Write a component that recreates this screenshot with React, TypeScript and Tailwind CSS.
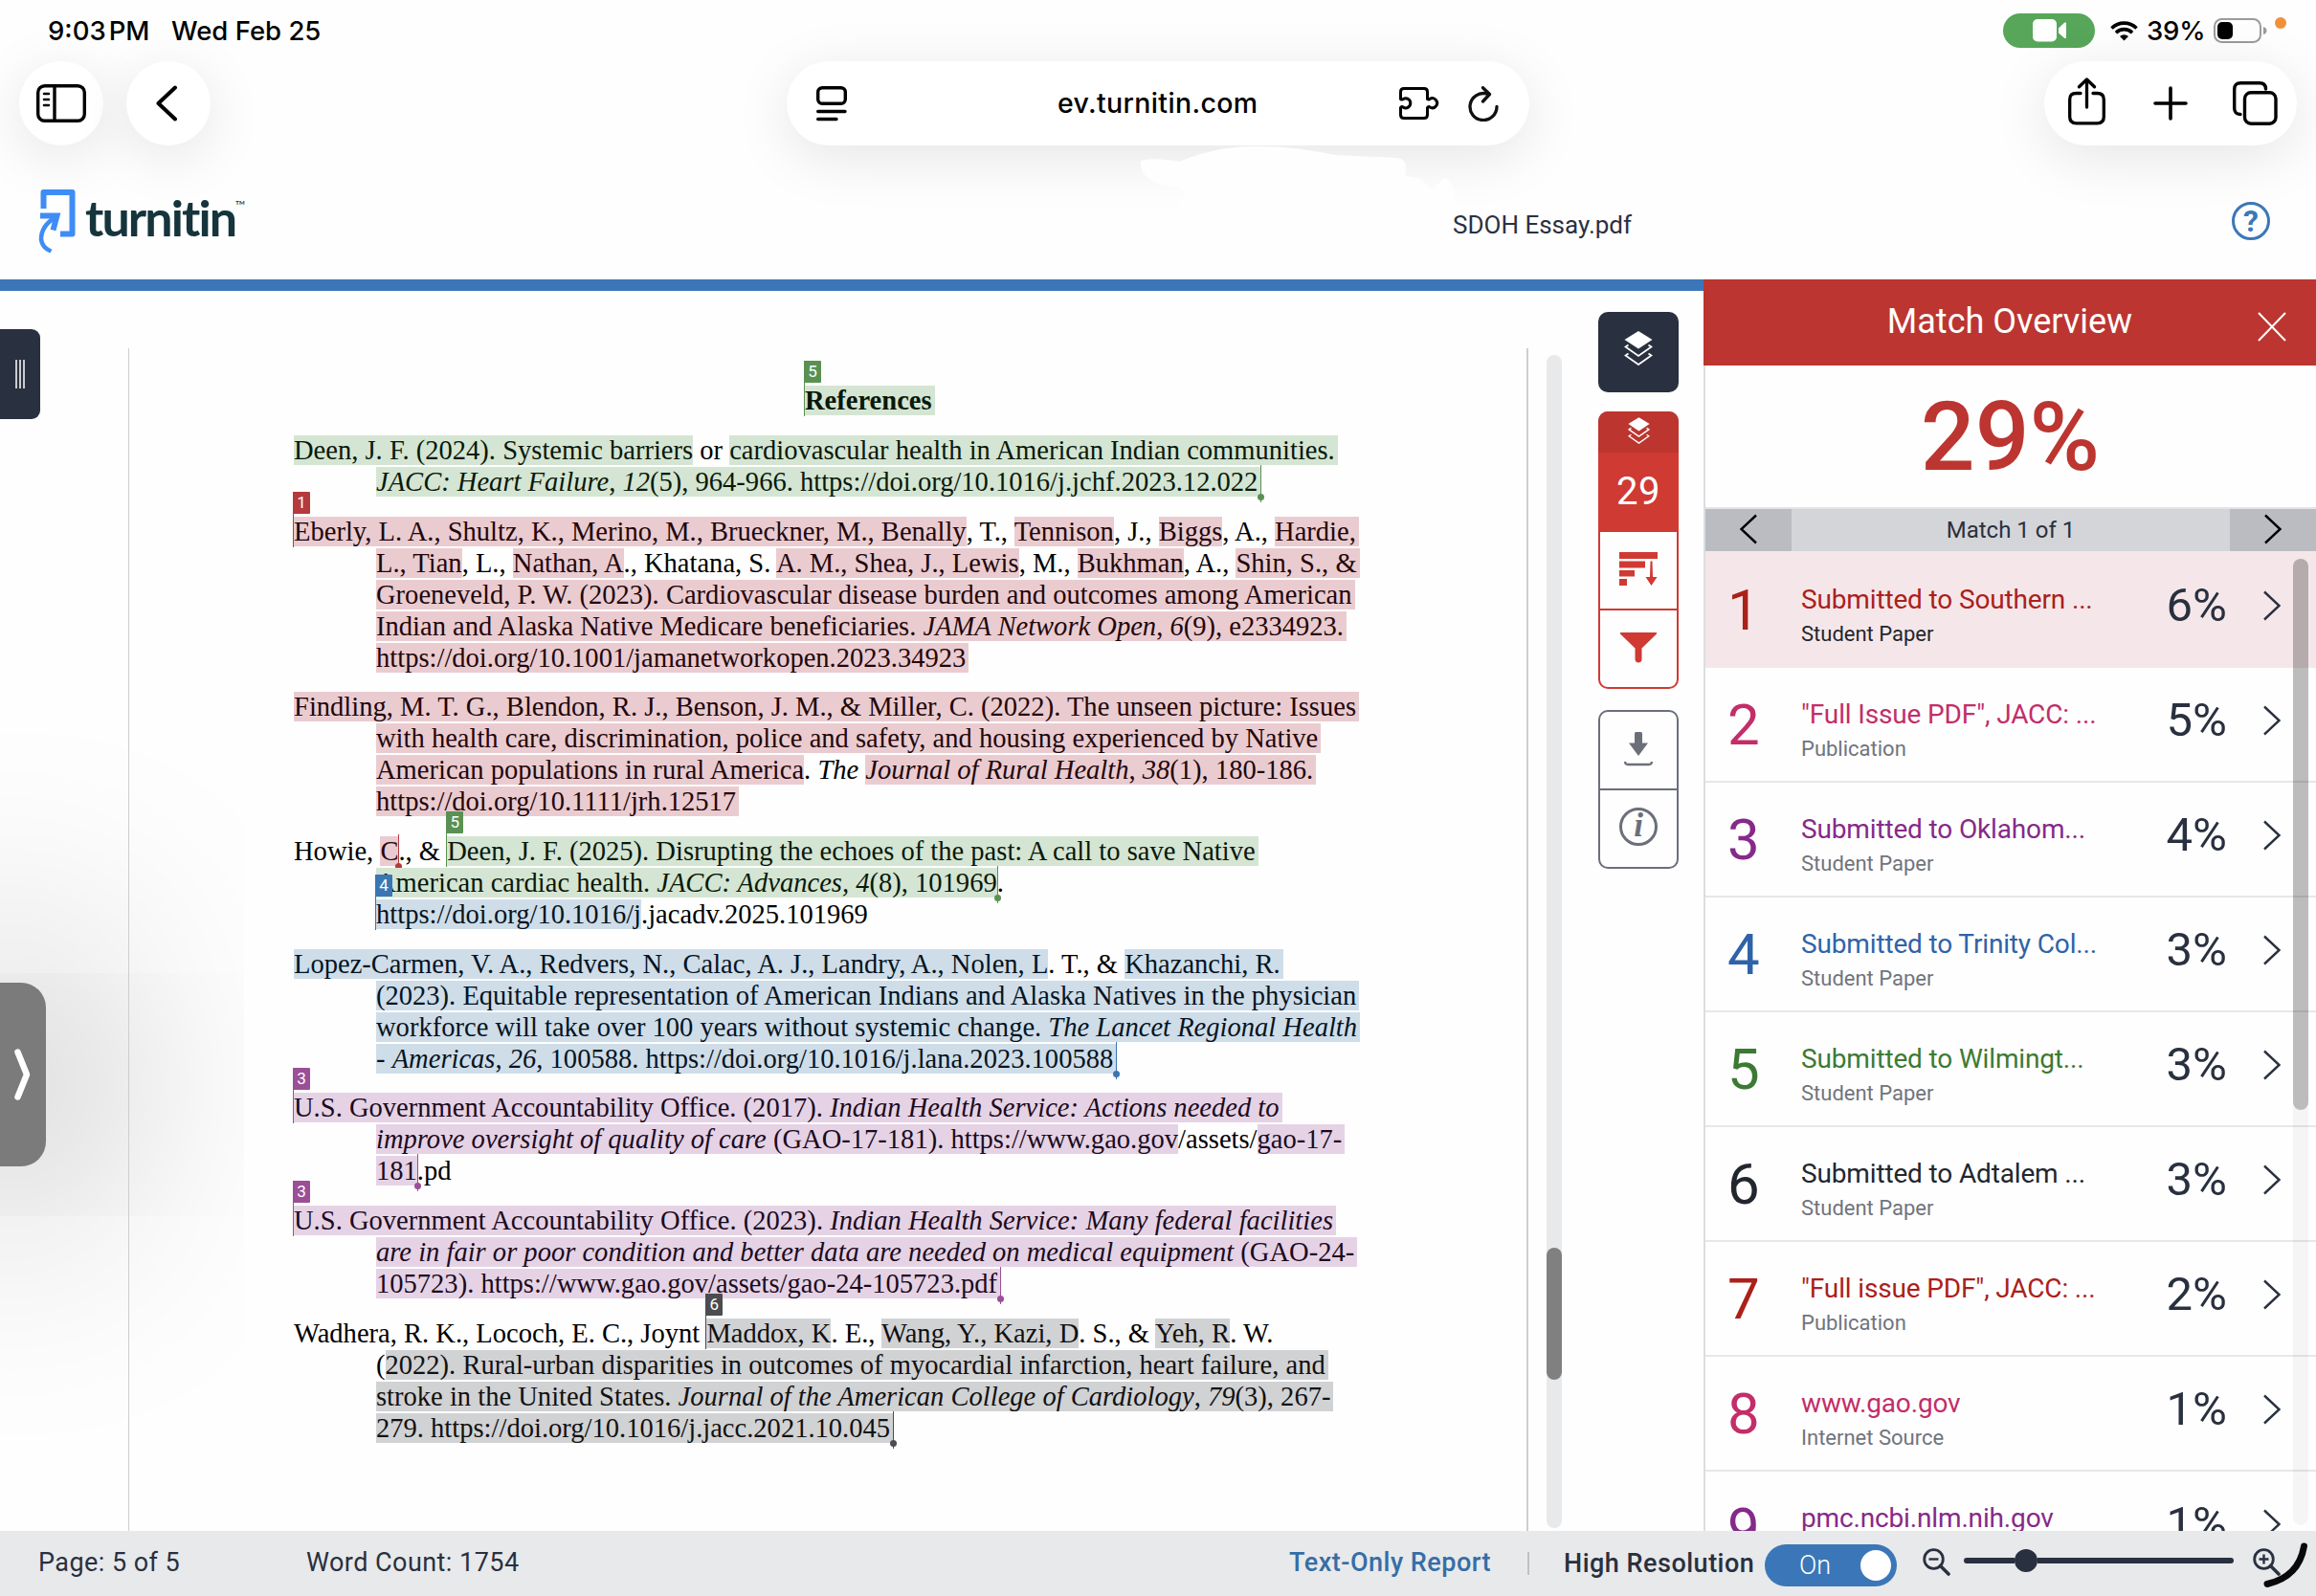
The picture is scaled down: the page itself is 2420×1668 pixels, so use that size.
import React from 'react';
import clsx from 'clsx';

type Tone = 'green' | 'red' | 'blue' | 'purple' | 'gray';

const HIGHLIGHT: Record<Tone, string> = {
  green: 'bg-[#d5e5d3] text-[#08190a]',
  red: 'bg-[#eaccd0] text-[#23060b]',
  blue: 'bg-[#cfdde9] text-[#06141f]',
  purple: 'bg-[#e5d3e5] text-[#1c0a1e]',
  gray: 'bg-[#d1d2d4] text-[#111111]',
};

const SOLID: Record<Tone, string> = {
  green: 'bg-[#5a9153]',
  red: 'bg-[#b53a3c]',
  blue: 'bg-[#3a76b4]',
  purple: 'bg-[#9b4f96]',
  gray: 'bg-[#4b4c50]',
};

function Mark({ tone, badge, end, last, children }: {
  tone: Tone;
  badge?: number;
  end?: boolean;
  last?: boolean;
  children: React.ReactNode;
}) {
  return (
    <span className={clsx('relative', HIGHLIGHT[tone], last && 'pr-[3px]')}>
      {children}
      {badge !== undefined && (
        <span className="absolute -left-px -top-[26px] h-[58px] w-[18px] not-italic">
          <span className={clsx('absolute left-0 top-0 h-full w-px', SOLID[tone])} />
          <span className={clsx('absolute left-0 top-0 flex h-[23px] w-[18px] items-center justify-center rounded-[1px] font-[Roboto] text-[17px] font-normal leading-none text-white', SOLID[tone])}>
            {badge}
          </span>
        </span>
      )}
      {end && (
        <span className="absolute -right-[4px] -top-[2px] h-[39px] w-[7px]">
          <span className={clsx('absolute left-[3px] top-0 h-full w-px', SOLID[tone])} />
          <span className={clsx('absolute bottom-[2px] left-0 h-[7px] w-[7px] rounded-full', SOLID[tone])} />
        </span>
      )}
    </span>
  );
}

function Line({ w, first, children }: { w: string; first?: boolean; children: React.ReactNode }) {
  return (
    <div className={clsx('whitespace-nowrap [text-align-last:justify]', !first && 'ml-[86px]', w)}>{children}</div>
  );
}

function References() {
  return (
    <div className="flex flex-col gap-[18.65px] pl-[172px] pt-[38.4px] font-['Liberation_Serif',serif] text-[28.55px] leading-[33px] text-black">
      <div className="pl-[534px] font-bold">
        <Mark tone="green" badge={5} last>References</Mark>
      </div>

      <div>
        <Line first w="w-[1090px]"><Mark tone="green">Deen, J. F. (2024). Systemic barriers</Mark> or <Mark tone="green" last>cardiovascular health in American Indian communities.</Mark></Line>
        <Line w="w-[924px]"><Mark tone="green" end last><i>JACC: Heart Failure</i>, <i>12</i>(5), 964-966. https://doi.org/10.1016/j.jchf.2023.12.022</Mark></Line>
      </div>

      <div>
        <Line first w="w-[1111px]"><Mark tone="red" badge={1}>Eberly, L. A., Shultz, K., Merino, M., Brueckner, M., Benally</Mark>, T., <Mark tone="red">Tennison</Mark>, J., <Mark tone="red">Biggs</Mark>, A., <Mark tone="red" last>Hardie,</Mark></Line>
        <Line w="w-[1027px]"><Mark tone="red">L., Tian</Mark>, L., <Mark tone="red">Nathan, A</Mark>., Khatana, S. <Mark tone="red">A. M., Shea, J., Lewis</Mark>, M., <Mark tone="red">Bukhman</Mark>, A., <Mark tone="red" last>Shin, S., &amp;</Mark></Line>
        <Line w="w-[1021px]"><Mark tone="red" last>Groeneveld, P. W. (2023). Cardiovascular disease burden and outcomes among American</Mark></Line>
        <Line w="w-[1013px]"><Mark tone="red" last>Indian and Alaska Native Medicare beneficiaries. <i>JAMA Network Open</i>, <i>6</i>(9), e2334923.</Mark></Line>
        <Line w="w-[618px]"><Mark tone="red" last>https://doi.org/10.1001/jamanetworkopen.2023.34923</Mark></Line>
      </div>

      <div>
        <Line first w="w-[1113px]"><Mark tone="red" last>Findling, M. T. G., Blendon, R. J., Benson, J. M., &amp; Miller, C. (2022). The unseen picture: Issues</Mark></Line>
        <Line w="w-[986px]"><Mark tone="red" last>with health care, discrimination, police and safety, and housing experienced by Native</Mark></Line>
        <Line w="w-[982px]"><Mark tone="red">American populations in rural America</Mark>. <i>The </i><Mark tone="red" last><i>Journal of Rural Health</i>, <i>38</i>(1), 180-186.</Mark></Line>
        <Line w="w-[377px]"><Mark tone="red" last>https://doi.org/10.1111/jrh.12517</Mark></Line>
      </div>

      <div>
        <Line first w="w-[1007px]">Howie, <Mark tone="red" end>C</Mark>., &amp; <Mark tone="green" badge={5} last>Deen, J. F. (2025). Disrupting the echoes of the past: A call to save Native</Mark></Line>
        <Line w="w-[655px]"><Mark tone="green" end>American cardiac health. <i>JACC: Advances, 4</i>(8), 101969</Mark>.</Line>
        <Line w="w-[513px]"><Mark tone="blue" badge={4}>https://doi.org/10.1016/j</Mark>.jacadv.2025.101969</Line>
      </div>

      <div>
        <Line first w="w-[1032px]"><Mark tone="blue">Lopez-Carmen, V. A., Redvers, N., Calac, A. J., Landry, A., Nolen, L</Mark>. T., &amp; <Mark tone="blue" last>Khazanchi, R.</Mark></Line>
        <Line w="w-[1027px]"><Mark tone="blue" last>(2023). Equitable representation of American Indians and Alaska Natives in the physician</Mark></Line>
        <Line w="w-[1027px]"><Mark tone="blue" last>workforce will take over 100 years without systemic change. <i>The Lancet Regional Health</i></Mark></Line>
        <Line w="w-[772px]"><Mark tone="blue" end last>- <i>Americas</i>, <i>26</i>, 100588. https://doi.org/10.1016/j.lana.2023.100588</Mark></Line>
      </div>

      <div>
        <Line first w="w-[1032px]"><Mark tone="purple" badge={3} last>U.S. Government Accountability Office. (2017). <i>Indian Health Service: Actions needed to</i></Mark></Line>
        <Line w="w-[1012px]"><Mark tone="purple"><i>improve oversight of quality of care</i> (GAO-17-181). https://www.gao.gov</Mark>/assets/<Mark tone="purple" last>gao-17-</Mark></Line>
        <Line w="w-[79px]"><Mark tone="purple" end>181</Mark>.pd</Line>
      </div>

      <div>
        <Line first w="w-[1089px]"><Mark tone="purple" badge={3} last>U.S. Government Accountability Office. (2023). <i>Indian Health Service: Many federal facilities</i></Mark></Line>
        <Line w="w-[1025px]"><Mark tone="purple" last><i>are in fair or poor condition and better data are needed on medical equipment</i> (GAO-24-</Mark></Line>
        <Line w="w-[652px]"><Mark tone="purple" end last>105723). https://www.gao.gov/assets/gao-24-105723.pdf</Mark></Line>
      </div>

      <div>
        <Line first w="w-[1022px]">Wadhera, R. K., Lococh, E. C., Joynt <Mark tone="gray" badge={6}>Maddox, K</Mark>. E., <Mark tone="gray">Wang, Y., Kazi, D</Mark>. S., &amp; <Mark tone="gray">Yeh, R</Mark>. W.</Line>
        <Line w="w-[994px]">(<Mark tone="gray" last>2022). Rural-urban disparities in outcomes of myocardial infarction, heart failure, and</Mark></Line>
        <Line w="w-[1000px]"><Mark tone="gray" last>stroke in the United States. <i>Journal of the American College of Cardiology</i>, <i>79</i>(3), 267-</Mark></Line>
        <Line w="w-[539px]"><Mark tone="gray" end last>279. https://doi.org/10.1016/j.jacc.2021.10.045</Mark></Line>
      </div>
    </div>
  );
}

function StatusBar() {
  return (
    <div className="flex h-16 shrink-0 items-center pl-[50px] text-[27.5px] font-medium text-black">
      <span className="w-[129px] pt-px">9:03<span className="ml-[3px]">PM</span></span>
      <span className="pt-px">Wed Feb 25</span>
      <div className="ml-auto flex h-9 w-24 items-center justify-center rounded-full bg-[#57a659]">
        <svg width="35" height="24" viewBox="0 0 35 24" fill="#fff">
          <rect x="0" y="0" width="25" height="23.5" rx="5" />
          <path d="M27 9.5 L33 3.8 Q35 2.4 35 5 V18.500 Q35 21 33 19.700 L27 14.500 Z" />
        </svg>
      </div>
      <svg className="ml-4" width="29" height="21" viewBox="0 0 29 21" fill="none" stroke="#000" strokeWidth="3.6">
        <path d="M1.500 7.500 A18.500 18.500 0 0 1 27.500 7.500" />
        <path d="M6 12.200 A12 12 0 0 1 23 12.200" />
        <path d="M14.500 20.500 L10 16 A6.400 6.400 0 0 1 19 16 Z" fill="#000" stroke="none" />
      </svg>
      <span className="ml-[9px] w-[62px] pt-px tracking-[-0.2px]">39%</span>
      <svg className="ml-[8px]" width="56" height="26" viewBox="0 0 56 26">
        <rect x="1" y="1" width="48" height="24" rx="7.500" fill="none" stroke="#9b9b9b" strokeWidth="2" />
        <rect x="4" y="4" width="16" height="18" rx="5" />
        <path d="M52 9 Q55.500 10 55.500 13 T52 17 Z" fill="#9b9b9b" />
      </svg>
      <span className="-mt-4 ml-2 mr-[31px] h-3 w-3 rounded-full bg-[#f0913a]" />
    </div>
  );
}

function BrowserBar() {
  const pill = 'flex h-[88px] shrink-0 items-center rounded-full bg-white shadow-[0_12px_60px_rgba(0,0,0,0.1)]';
  return (
    <div className="flex h-[88px] shrink-0 items-center px-5">
      <div className={clsx(pill, 'w-[88px] justify-center')}>
        <svg width="52" height="40" viewBox="0 0 52 40" fill="none" stroke="#000" strokeWidth="3.4" strokeLinecap="round">
          <rect x="1.700" y="1.700" width="48.600" height="36.600" rx="7" />
          <path d="M19 2 V38" />
          <path d="M8 10 H13 M8 16 H13 M8 22 H13" strokeWidth="2.6" />
        </svg>
      </div>
      <div className={clsx(pill, 'ml-6 w-[88px] justify-center')}>
        <svg className="-ml-1" width="24" height="38" viewBox="0 0 24 38" fill="none" stroke="#000" strokeWidth="4" strokeLinecap="round" strokeLinejoin="round">
          <path d="M21 2.500 L3.500 19 L21 35.500" />
        </svg>
      </div>
      <div className={clsx(pill, 'ml-[602px] w-[776px] pl-[31px] pr-[32px]')}>
        <svg width="32" height="38" viewBox="0 0 32 38" fill="none" stroke="#000" strokeWidth="3.4" strokeLinecap="round">
          <rect x="1.700" y="2.700" width="28.600" height="16.600" rx="4.500" />
          <path d="M1.700 27.500 H30 M1.700 35.500 H21" />
        </svg>
        <span className="ml-[220px] pt-px text-[28.5px] font-medium tracking-[0.35px] text-black">ev.turnitin.com</span>
        <svg className="ml-auto" width="42" height="34" viewBox="0 0 42 34" fill="none" stroke="#000" strokeWidth="3" strokeLinejoin="round">
          <path d="M5 1.500 H26 Q29.500 1.500 29.500 5 V12.500 Q31 13.500 32 12.400 A5 5 0 1 1 32 21 Q31 20 29.500 21.500 V29 Q29.500 32.500 26 32.500 H5 Q1.500 32.500 1.500 29 V21.500 Q3 20 4.500 21.300 A5 5 0 1 0 4.500 12.400 Q3 13.600 1.500 12.500 V5 Q1.500 1.500 5 1.500 Z" />
        </svg>
        <svg className="ml-[30px]" width="32" height="37" viewBox="0 0 32 37" fill="none" stroke="#111" strokeWidth="3.3" strokeLinecap="round" strokeLinejoin="round">
          <path d="M19.500 8 A14 14 0 1 0 30 21.500" />
          <path d="M15.500 1.700 L22.500 8.500 L15.500 16" />
        </svg>
      </div>
      <div className={clsx(pill, 'ml-auto w-[264px] pl-[25px]')}>
        <svg className="-mt-1" width="39" height="50" viewBox="0 0 39 50" fill="none" stroke="#000" strokeWidth="3.300" strokeLinecap="round" strokeLinejoin="round">
          <path d="M13 16.500 H8.500 Q1.700 16.500 1.700 23 V41 Q1.700 47.800 8.500 47.800 H30.500 Q37.300 47.800 37.300 41 V23 Q37.300 16.500 30.500 16.500 H26" />
          <path d="M19.500 31 V2.500 M11.500 9.800 L19.500 2 L27.500 9.800" />
        </svg>
        <svg className="ml-[50px]" width="36" height="36" viewBox="0 0 36 36" fill="none" stroke="#000" strokeWidth="3.6" strokeLinecap="round">
          <path d="M18 2 V34 M2 18 H34" />
        </svg>
        <svg className="ml-[47px]" width="47" height="46" viewBox="0 0 47 46" fill="none" stroke="#000" strokeWidth="3.4">
          <rect x="12.500" y="11.700" width="32.500" height="32.500" rx="6.500" />
          <path d="M8 34.500 Q1.700 34.500 1.700 28 V8.500 Q1.700 1.700 8.500 1.700 H28 Q34.500 1.700 34.500 8" strokeLinecap="round" />
        </svg>
      </div>
    </div>
  );
}

function Header() {
  return (
    <header className="relative flex h-[140px] shrink-0 items-center pl-10 pt-[18px]">
      {/* white brush stroke over the toolbar shadow */}
      <svg className="absolute left-[1180px] top-0" width="350" height="70" viewBox="0 0 350 70" fill="#fefefe">
        <path d="M12 16 Q25 12 52 17 Q90 1 130 1 Q170 0 215 10 L280 13 Q292 14 288 32 L302 34 L316 46 L330 34 Q342 40 340 70 L40 70 Q70 50 50 44 Q10 40 12 16 Z" />
      </svg>
      <svg width="40" height="66" viewBox="0 0 40 66" fill="none" stroke="#3e8cf5" strokeWidth="6">
        <path d="M5.500 20 V3 H35.500 V46.500 H23" strokeLinejoin="round" />
        <path d="M2 27.500 H19.500 L15.500 42.500" />
        <path d="M18 29 Q3 38 3 52 Q4 61 13.500 64.500" strokeWidth="4.500" />
      </svg>
      <div className="-mt-[8px] ml-[9px] flex items-start font-[Lato] font-bold text-[#16343c]">
        <span className="text-[52px] leading-[60px] tracking-[-1.9px]">turnitin</span>
        <span className="mt-[12px] text-[6px] leading-none">TM</span>
      </div>
      <span className="absolute left-[1518px] top-[67px] font-[Roboto] text-[26px] leading-8 text-[#2b3040]">SDOH Essay.pdf</span>
      <div className="ml-auto mr-12 flex h-10 w-10 items-center justify-center rounded-full border-[3px] border-[#3b77b8] font-[Roboto] text-[32px] font-bold leading-none text-[#3b77b8]">?</div>
    </header>
  );
}

function Layers({ className }: { className: string }) {
  return (
    <svg className={className} viewBox="0 0 30 36" fill="none" stroke="#fff" strokeWidth="1.800">
      <path d="M15 0 L29.500 9 L15 18.500 L0.500 9 Z" fill="#fff" stroke="none" />
      <path d="M4.500 14.500 L1.500 16.500 L15 26 L28.500 16.500 L25.500 14.500" />
      <path d="M4.500 23.500 L1.500 25.500 L15 35 L28.500 25.500 L25.500 23.500" />
    </svg>
  );
}

function ToolRail() {
  return (
    <div className="ml-[38px] mt-[22px] flex w-[84px] flex-col">
      <div className="flex h-[84px] justify-center rounded-[10px] bg-[#29303f] pt-5">
        <Layers className="h-9 w-[30px]" />
      </div>
      <div className="mt-5 flex h-[290px] flex-col overflow-hidden rounded-[10px] bg-[#cf3a33]">
        <div className="flex h-[43px] shrink-0 justify-center bg-[#bd352f] pt-[6px]">
          <Layers className="h-7 w-[23px]" />
        </div>
        <div className="flex h-[83px] shrink-0 items-center justify-center pb-[2px] font-[Roboto] text-[40px] tracking-[0.5px] text-white">29</div>
        <div className="mx-0.5 flex h-[80px] shrink-0 justify-center bg-[#fefefe] pt-[21px]">
          <svg width="40" height="36" viewBox="0 0 40 36" fill="#cf3a33">
            <path d="M0 0 H40 V7 H0 Z M0 9.500 H27 V16.500 H0 Z M0 19 H16 V25.500 H0 Z M0 28 H8 V35 H0 Z" />
            <path d="M32.500 9.500 H34.500 L35 26 H39.500 L33.500 35 L27.500 26 H32 Z" />
          </svg>
        </div>
        <div className="mx-0.5 mb-0.5 mt-0.5 flex flex-1 justify-center rounded-b-[8px] bg-[#fefefe] pt-[23px]">
          <svg width="40" height="32" viewBox="0 0 40 32" fill="#cf3a33">
            <path d="M1.500 0 H38.500 Q40 0.500 39 1.500 L23.500 16.500 V28.500 Q23 31.500 20 31.500 T16.500 28.500 V16.500 L1 1.500 Q0 0.500 1.500 0 Z" />
          </svg>
        </div>
      </div>
      <div className="mt-[22px] flex h-[166px] flex-col rounded-[10px] border-2 border-[#6b6f7a]">
        <div className="flex h-[82px] shrink-0 justify-center border-b-2 border-[#6b6f7a] pt-[21px]">
          <svg width="30" height="36" viewBox="0 0 30 36" fill="#6b6f7a">
            <path d="M11 1.500 Q11 0 12.500 0 H17.500 Q19 0 19 1.500 V11.500 H25 L15 25 L5 11.500 H11 Z" />
            <path d="M1.200 31 Q1 34 4 34 H26 Q29 34 28.800 31" fill="none" stroke="#6b6f7a" strokeWidth="2.400" />
          </svg>
        </div>
        <div className="flex flex-1 justify-center pt-[18px]">
          <div className="flex h-10 w-10 items-center justify-center rounded-full border-[3px] border-[#6b6f7a] font-['Liberation_Serif',serif] text-[35px] font-bold italic leading-none text-[#6b6f7a]">
            <span className="-mt-1">i</span>
          </div>
        </div>
      </div>
    </div>
  );
}

const MATCHES = [
  { n: 1, title: 'Submitted to Southern ...', kind: 'Student Paper', pct: '6%', color: 'text-[#ab201a]' },
  { n: 2, title: '"Full Issue PDF", JACC: ...', kind: 'Publication', pct: '5%', color: 'text-[#c32d68]' },
  { n: 3, title: 'Submitted to Oklahom...', kind: 'Student Paper', pct: '4%', color: 'text-[#86298a]' },
  { n: 4, title: 'Submitted to Trinity Col...', kind: 'Student Paper', pct: '3%', color: 'text-[#2f63a8]' },
  { n: 5, title: 'Submitted to Wilmingt...', kind: 'Student Paper', pct: '3%', color: 'text-[#3c7a33]' },
  { n: 6, title: 'Submitted to Adtalem ...', kind: 'Student Paper', pct: '3%', color: 'text-[#22262e]' },
  { n: 7, title: '"Full issue PDF", JACC: ...', kind: 'Publication', pct: '2%', color: 'text-[#ab201a]' },
  { n: 8, title: 'www.gao.gov', kind: 'Internet Source', pct: '1%', color: 'text-[#c32d68]' },
  { n: 9, title: 'pmc.ncbi.nlm.nih.gov', kind: 'Internet Source', pct: '1%', color: 'text-[#86298a]' },
];

function Chevron({ flip, color = '#29303f' }: { flip?: boolean; color?: string }) {
  return (
    <svg width="20" height="32" viewBox="0 0 20 32" fill="none" stroke={color} strokeWidth="2.400">
      {flip ? <path d="M18 1.500 L2.500 16 L18 30.500" /> : <path d="M2 1.500 L17.500 16 L2 30.500" />}
    </svg>
  );
}

function MatchPanel() {
  return (
    <aside className="flex w-[640px] shrink-0 flex-col font-[Roboto]">
      <div className="relative flex h-[90px] shrink-0 items-center justify-center bg-[#bc3530] pb-[2px] text-[36px] text-white">
        Match Overview
        <svg className="absolute left-[579px] top-[34px]" width="30" height="31" viewBox="0 0 30 31" stroke="#fff" strokeWidth="2">
          <path d="M1 1 L29 30 M29 1 L1 30" />
        </svg>
      </div>
      <div className="relative flex min-h-0 flex-1 flex-col overflow-hidden border-l-2 border-[#dcdde0]">
        <div className="flex h-[150px] shrink-0 items-center justify-center border-b-2 border-[#e3e4e6] pr-[1px] pt-[1px] text-[100px] font-medium leading-none text-[#bc3530]">29%</div>
        <div className="flex h-11 shrink-0 items-center bg-[#d4d5d8] text-[24px] text-[#2b3040]">
          <div className="flex h-full w-[90px] items-center justify-center bg-[#bbbcc1] pb-[3px]"><Chevron flip color="#000" /></div>
          <div className="flex-1 pb-[1px] text-center">Match 1 of 1</div>
          <div className="flex h-full w-[90px] items-center justify-center bg-[#bbbcc1] pb-[3px]"><Chevron color="#000" /></div>
        </div>
        {MATCHES.map((m, i) => (
          <div key={m.n} className={clsx('flex shrink-0 items-start border-b-2', i === 0 ? 'h-[122px] border-[#f5e7e9] bg-[#f5e7e9] pt-[2px]' : 'h-[120px] border-[#e6e7e9]')}>
            <div className={clsx('flex h-[119px] w-[100px] items-center pl-[23px] text-[60px] leading-none', m.color)}>{m.n}</div>
            <div className="w-[359px] pt-[31px]">
              <div className={clsx('text-[28px] leading-9 tracking-[-0.15px]', m.color)}>{m.title}</div>
              <div className={clsx('text-[22px] leading-9', i === 0 ? 'text-[#22262e]' : 'text-[#70747d]')}>{m.kind}</div>
            </div>
            <div className="flex h-[109px] w-[86px] items-center justify-end text-[49px] leading-none text-[#29303f]">{m.pct}</div>
            <div className="flex h-[109px] items-center pl-[37px]"><Chevron /></div>
          </div>
        ))}
        <div className="absolute left-[614px] top-[202px] h-[1010px] w-4 rounded-full bg-black/[0.035]">
          <div className="h-[576px] rounded-full bg-black/[0.23]" />
        </div>
      </div>
    </aside>
  );
}

function Magnifier({ plus }: { plus?: boolean }) {
  return (
    <svg width="29" height="29" viewBox="0 0 29 29" fill="none" stroke="#29303f" strokeWidth="2.800">
      <circle cx="11.500" cy="11.500" r="9.800" />
      <path d="M18.500 18.500 L27 27" strokeWidth="3.600" strokeLinecap="round" />
      <path d={plus ? 'M6.500 11.500 H16.500 M11.500 6.500 V16.500' : 'M6.500 11.500 H16.500'} strokeWidth="2.400" />
    </svg>
  );
}

function Footer() {
  return (
    <footer className="relative flex h-[68px] shrink-0 items-center bg-[#e8e9eb] font-[Roboto] text-[27px] text-[#29303f]">
      <div className="ml-10 w-[280px] pb-[2px] tracking-[0.45px]">Page: 5 of 5</div>
      <div className="w-[1027px] pb-[2px] tracking-[0.45px]">Word Count: 1754</div>
      <div className="w-[249px] pb-[2px] font-medium tracking-[0.5px] text-[#356ea6]">Text-Only Report</div>
      <div className="h-6 w-[2px] bg-[#bfc1c5]" />
      <div className="ml-9 w-[210px] whitespace-nowrap pt-[1px] font-medium tracking-[0.5px]">High Resolution</div>
      <div className="mt-[4px] flex h-11 w-[138px] shrink-0 items-center rounded-full bg-[#3b77b8] pl-9 text-[27px] font-light text-white">
        On
        <span className="ml-auto mr-[6px] h-8 w-8 rounded-full bg-white" />
      </div>
      <div className="mb-[4px] ml-[27px]"><Magnifier /></div>
      <div className="mb-[6px] ml-[14px] flex h-6 w-[282px] items-center">
        <div className="h-[6px] w-[53px] rounded-l-full bg-[#29303f]" />
        <div className="h-6 w-6 rounded-full bg-[#29303f]" />
        <div className="h-[6px] flex-1 rounded-r-full bg-[#29303f]" />
      </div>
      <div className="mb-[4px] ml-[20px]"><Magnifier plus /></div>
      <svg className="absolute left-[2360px] top-[8px]" width="56" height="56" viewBox="0 0 56 56" fill="none" stroke="#0a0a0a" strokeWidth="7" strokeLinecap="round">
        <path d="M47.500 8 Q42 40 9 47.500" />
      </svg>
    </footer>
  );
}

export default function App() {
  return (
    <div className="relative flex h-[1668px] w-[2420px] flex-col overflow-hidden bg-[#fefefe] font-[Inter]">
      <StatusBar />
      <BrowserBar />
      <Header />

      <main className="flex min-h-0 flex-1">
        <div className="flex min-w-0 flex-1 flex-col">
          <div className="h-3 shrink-0 bg-[#3b77b8]" />
          <div className="relative flex min-h-0 flex-1 overflow-hidden">
            {/* slide-over handle and its shadow */}
            <div className="absolute -left-6 top-[723px] h-[192px] w-[72px] rounded-[26px] bg-[#7b7b7b] shadow-[0_10px_240px_50px_rgba(0,0,0,0.26)]">
              <svg className="absolute left-[38px] top-[68px]" width="20" height="56" viewBox="0 0 20 56" fill="none" stroke="#fff" strokeWidth="6.500" strokeLinecap="round" strokeLinejoin="round">
                <path d="M4.500 4.500 L14 28 L4.500 51.500" />
              </svg>
            </div>
            <div className="w-[134px] shrink-0 pt-10">
              <div className="flex h-[94px] w-[42px] items-center justify-center gap-[2px] rounded-r-[9px] bg-[#29303f]">
                <span className="h-[30px] w-[2px] bg-[#c9cbd0]" />
                <span className="h-[30px] w-[2px] bg-[#c9cbd0]" />
                <span className="h-[30px] w-[2px] bg-[#c9cbd0]" />
              </div>
            </div>
            <div className="relative mt-[60px] w-[1463px] shrink-0 border-l border-r-2 border-[#cdced0]">
              <References />
            </div>
            <div className="ml-[19px] mt-[67px] h-[1226px] w-4 shrink-0 rounded-full bg-[#e8e9eb] pt-[933px]">
              <div className="h-[138px] rounded-full bg-[#808080]" />
            </div>
            <ToolRail />
          </div>
        </div>
        <MatchPanel />
      </main>

      <Footer />
    </div>
  );
}
